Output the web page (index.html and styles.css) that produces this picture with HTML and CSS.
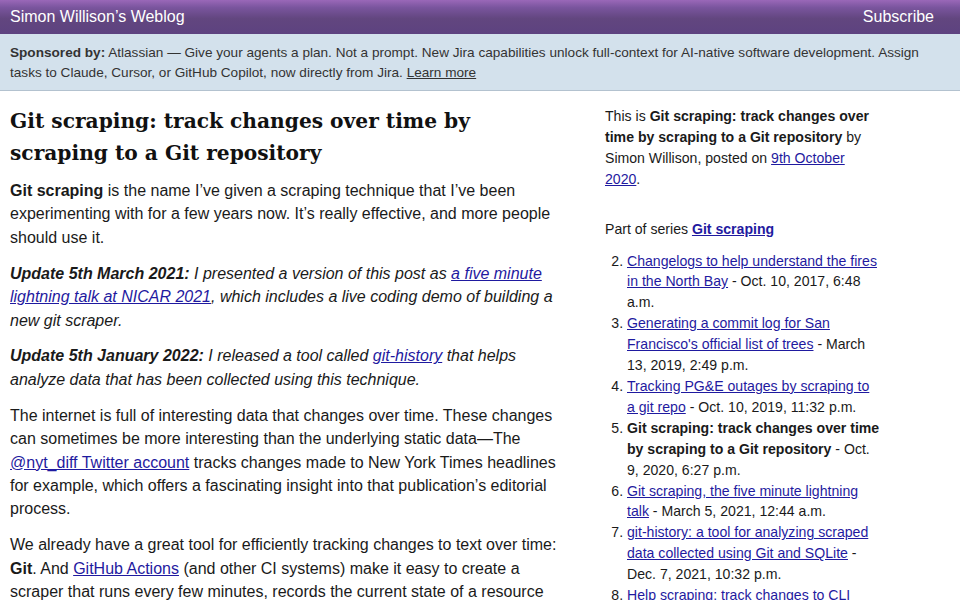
FILE: index.html
```html
<!DOCTYPE html>
<html lang="en">
<head>
<meta charset="utf-8">
<title>Git scraping: track changes over time by scraping to a Git repository</title>
<link rel="stylesheet" href="styles.css">
</head>
<body>
<header class="site-header">
  <a class="site-title" href="#">Simon Willison’s Weblog</a>
  <a class="subscribe" href="#">Subscribe</a>
</header>
<div class="sponsor">
  <strong>Sponsored by:</strong> Atlassian — Give your agents a plan. Not a prompt. New Jira capabilities unlock full-context for AI-native software development. Assign tasks to Claude, Cursor, or GitHub Copilot, now directly from Jira. <a href="#">Learn more</a>
</div>
<div class="layout">
  <main class="entry">
    <h1>Git scraping: track changes over time by scraping to a Git repository</h1>
    <p><strong>Git scraping</strong> is the name I’ve given a scraping technique that I’ve been experimenting with for a few years now. It’s really effective, and more people should use it.</p>
    <p><em><strong>Update 5th March 2021:</strong> I presented a version of this post as <a href="#">a five minute lightning talk at NICAR 2021</a>, which includes a live coding demo of building a new git scraper.</em></p>
    <p><em><strong>Update 5th January 2022:</strong> I released a tool called <a href="#">git-history</a> that helps analyze data that has been collected using this technique.</em></p>
    <p>The internet is full of interesting data that changes over time. These changes can sometimes be more interesting than the underlying static data—The <a href="#">@nyt_diff Twitter account</a> tracks changes made to New York Times headlines for example, which offers a fascinating insight into that publication’s editorial process.</p>
    <p>We already have a great tool for efficiently tracking changes to text over time: <strong>Git</strong>. And <a href="#">GitHub Actions</a> (and other CI systems) make it easy to create a scraper that runs every few minutes, records the current state of a resource and records changes to that resource over time in the commit history.</p>
  </main>
  <aside class="sidebar">
    <p>This is <strong>Git scraping: track changes over time by scraping to a Git repository</strong> by Simon Willison, posted on <a href="#">9th October 2020</a>.</p>
    <p class="series">Part of series <a href="#"><strong>Git scraping</strong></a></p>
    <ol start="2">
      <li><a href="#">Changelogs to help understand the fires in the North Bay</a> - Oct. 10, 2017, 6:48 a.m.</li>
      <li><a href="#">Generating a commit log for San Francisco's official list of trees</a> - March 13, 2019, 2:49 p.m.</li>
      <li><a href="#">Tracking PG&amp;E outages by scraping to a git repo</a> - Oct. 10, 2019, 11:32 p.m.</li>
      <li><strong>Git scraping: track changes over time by scraping to a Git repository</strong> - Oct. 9, 2020, 6:27 p.m.</li>
      <li><a href="#">Git scraping, the five minute lightning talk</a> - March 5, 2021, 12:44 a.m.</li>
      <li><a href="#">git-history: a tool for analyzing scraped data collected using Git and SQLite</a> - Dec. 7, 2021, 10:32 p.m.</li>
      <li><a href="#">Help scraping: track changes to CLI tools by recording their --help using Git</a> - Feb. 2, 2022, 11:46 p.m.</li>
    </ol>
  </aside>
</div>
</body>
</html>
```
FILE: styles.css
```css
html, body {
  margin: 0;
  padding: 0;
}
body {
  font-family: "Liberation Sans", Arial, sans-serif;
  color: #1a1a1a;
  background: #fff;
}
a {
  color: #1f1aa0;
}
.site-header {
  height: 34px;
  display: flex;
  align-items: center;
  justify-content: space-between;
  padding: 0 26px 0 10px;
  background: linear-gradient(to bottom, #9a68b8 0%, #7a559e 22%, #62467f 55%, #5d4280 100%);
}
.site-header a {
  color: #fff;
  text-decoration: none;
  font-size: 16px;
}
.sponsor {
  background: #d3e1ec;
  border-bottom: 1px solid #b3c2cf;
  padding: 9px 10px 8px;
  font-size: 13.6px;
  line-height: 19.5px;
  color: #333;
}
.sponsor a {
  color: #333;
}
.layout {
  display: flex;
  align-items: flex-start;
}
.entry {
  width: 550px;
  margin-left: 10px;
  padding-top: 14px;
}
.entry h1 {
  font-family: "DejaVu Serif", Georgia, serif;
  font-size: 20.2px;
  line-height: 32px;
  margin: 0 0 10px;
  color: #111;
}
.entry p {
  font-size: 16px;
  line-height: 23.4px;
  margin: 0 0 12.5px;
}
.sidebar {
  width: 275px;
  margin-left: 45px;
  padding-top: 15px;
  font-size: 14.1px;
  line-height: 20.9px;
}
.sidebar p {
  margin: 0 0 29px;
}
.sidebar p.series {
  margin: 0 0 11px;
}
.sidebar ol {
  margin: 0;
  padding-left: 22px;
}
```
